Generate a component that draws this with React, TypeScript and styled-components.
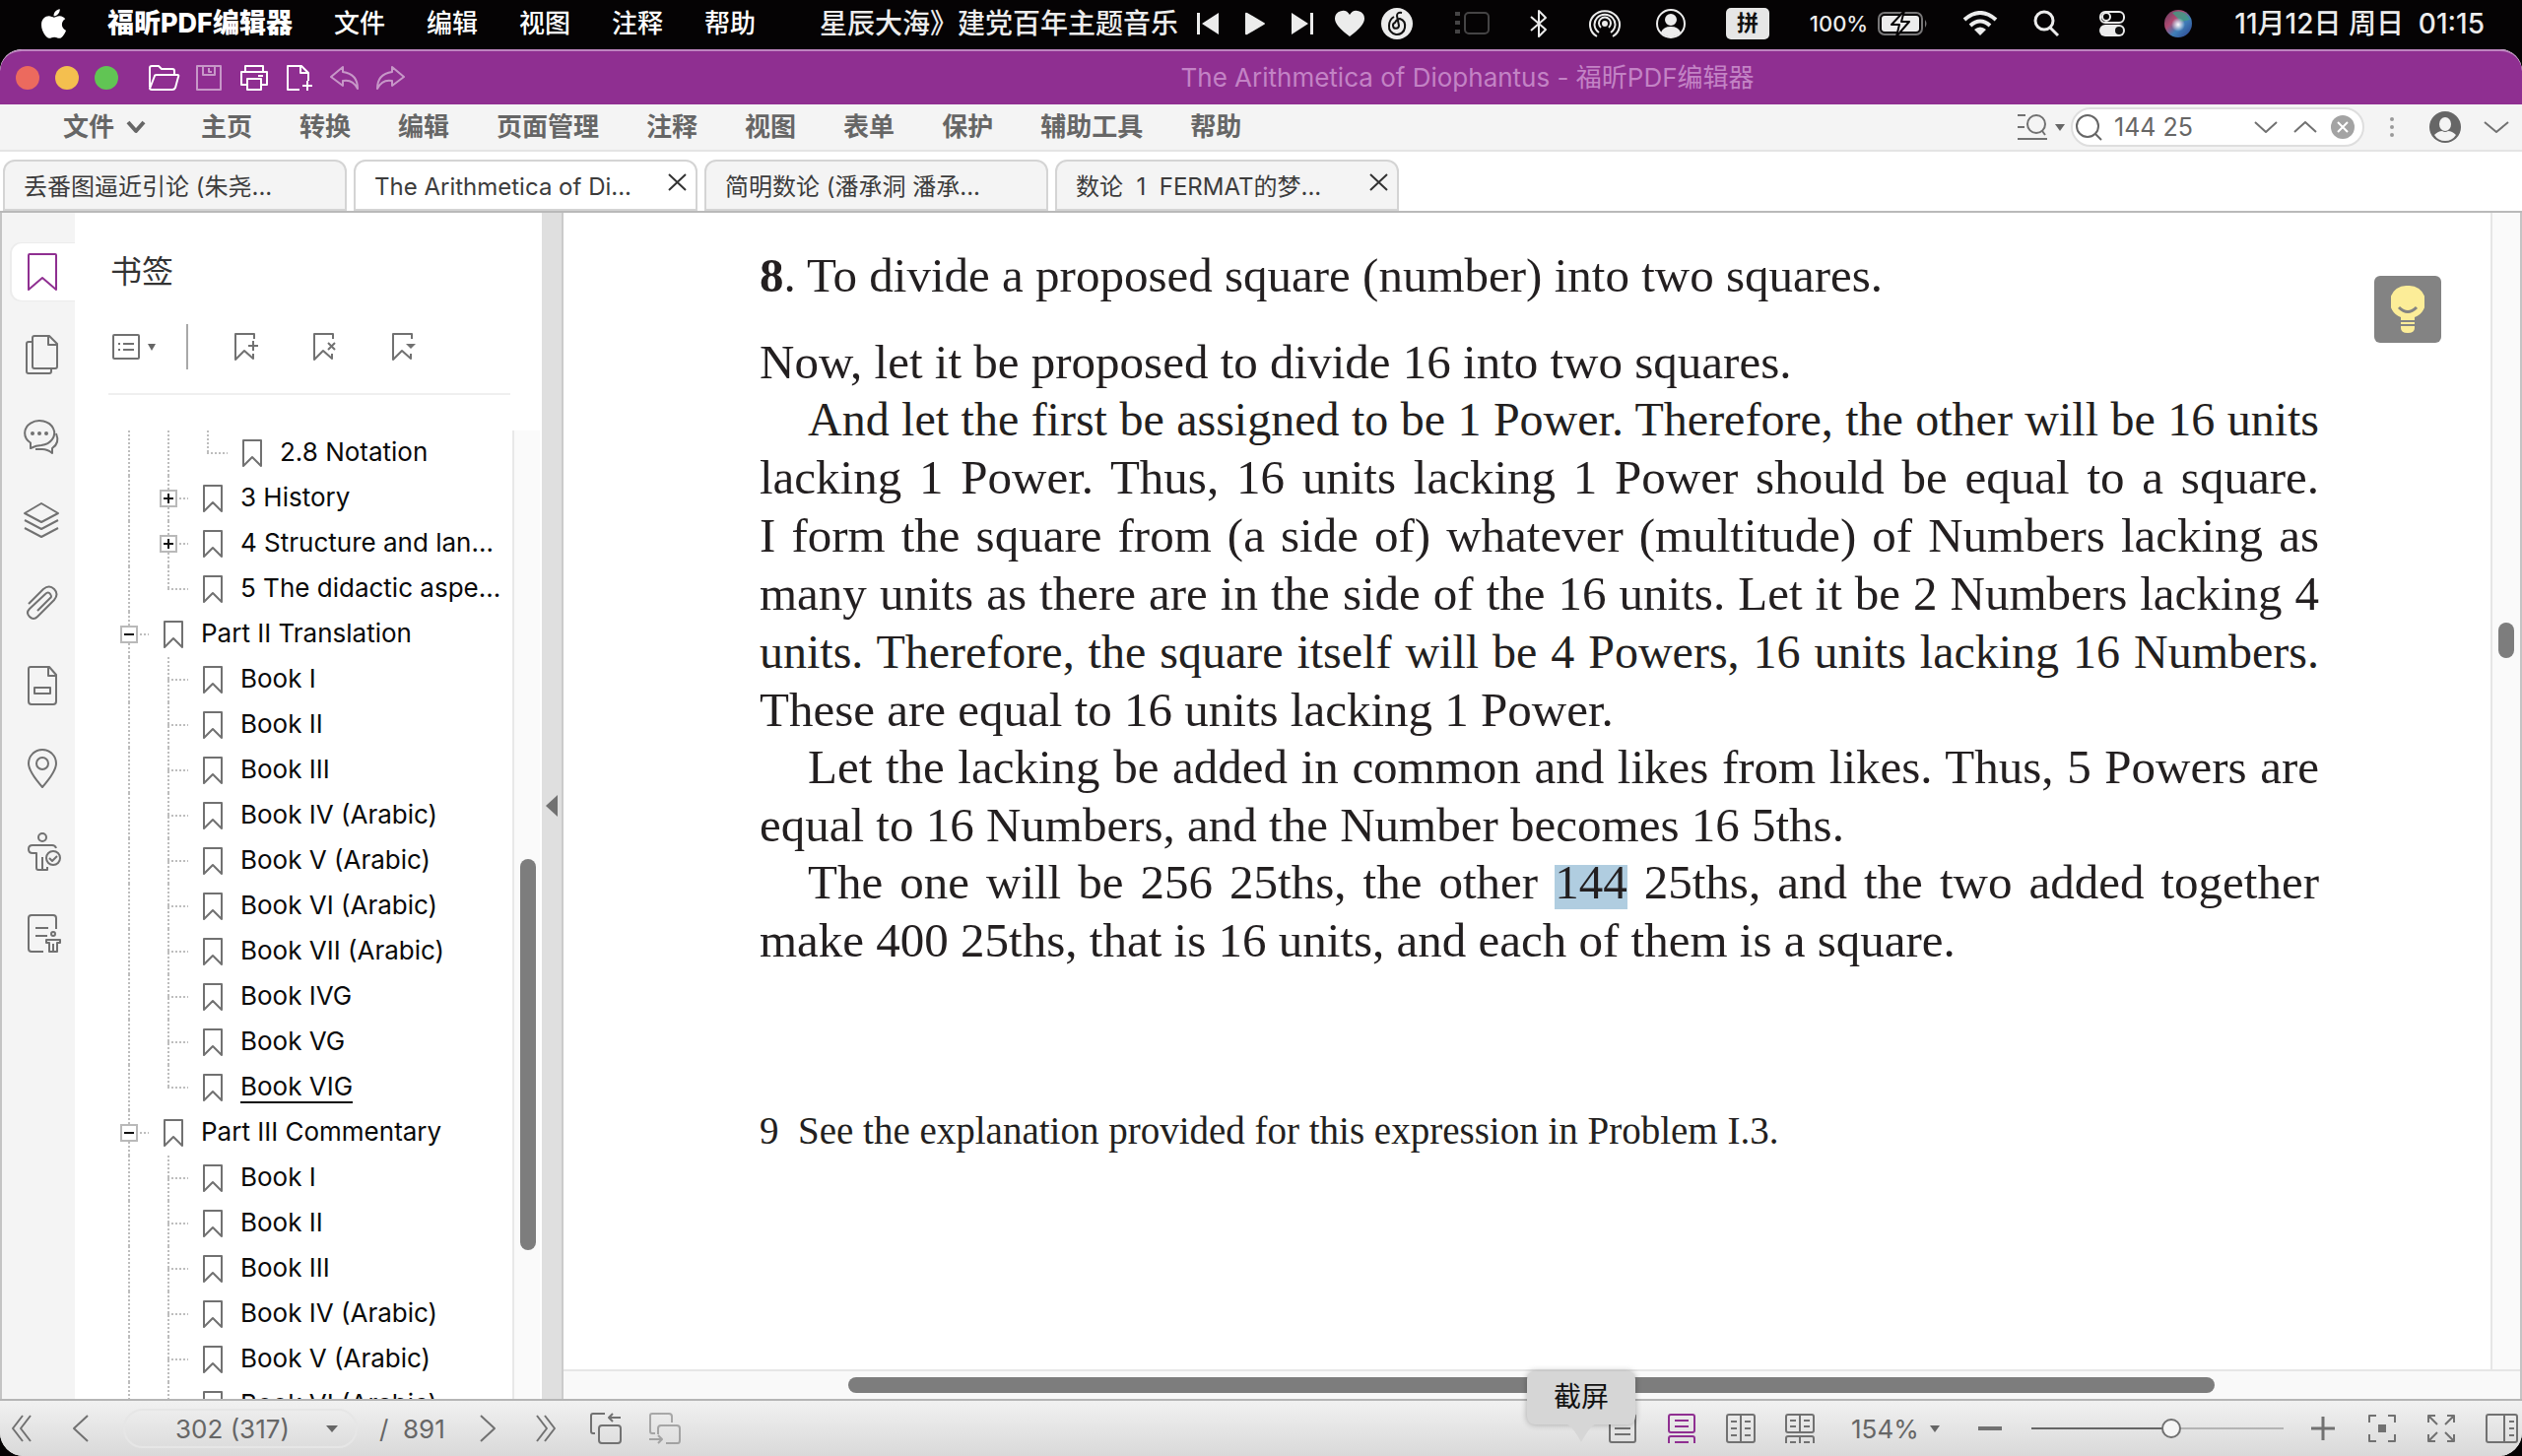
import React from "react";
import styled, { createGlobalStyle, css } from "styled-components";
import { FaApple } from "react-icons/fa";

const ui = `Inter, "Noto Sans CJK SC", sans-serif`;
const serif = `"Liberation Serif", "Noto Sans CJK SC", serif`;
const purple = "#8f2f91";
const grey = "#717171";

const Global = createGlobalStyle`
  * { box-sizing: border-box; }
  body { margin: 0; background: #050304; font-family: ${ui}; }
  button, input, select { font: inherit; color: inherit; border: 0; padding: 0; margin: 0; background: none; outline: 0; }
  svg { display: block; flex: none; }
`;

const Desktop = styled.div`
  display: flex;
  flex-direction: column;
  height: 100vh;
  overflow: hidden;
`;

/* ---------- system menu bar ---------- */
const MenuBar = styled.header`
  display: flex;
  align-items: center;
  flex: none;
  height: 50px;
  padding: 0 38px 2px 40px;
  color: #ececec;
  background: #050304;
  font-size: 26px;
  line-height: 38px;
  white-space: nowrap;
`;
const AppleButton = styled.button`
  width: 29px;
  margin-right: 40px;
  font-size: 32px;
  color: #fff;
  svg { width: 29px; height: 34px; }
`;
const SystemMenus = styled.nav`
  display: flex;
  gap: 42px;
  color: #fff;
  font-weight: 500;
`;
const MenuName = styled.button<{ $app?: boolean }>`
  font-size: ${(p) => (p.$app ? 27 : 26)}px;
  font-weight: ${(p) => (p.$app ? 800 : 500)};
`;
const StatusArea = styled.div`
  display: flex;
  align-items: center;
  margin-left: auto;
`;
const Song = styled.span`
  font-size: 28px;
  font-weight: 500;
  margin-right: 6px;
`;
const MediaButtons = styled.div`
  display: flex;
  margin-right: 19px;
`;
const Slot = styled.button<{ $w?: number }>`
  width: ${(p) => p.$w ?? 67}px;
  height: 44px;
  display: flex;
  align-items: center;
  justify-content: center;
  gap: 10px;
`;
const InputMethod = styled.span`
  width: 44px;
  height: 32px;
  border-radius: 5px;
  background: #e6e6e6;
  color: #111;
  font-size: 22px;
  font-weight: 700;
  line-height: 31px;
  text-align: center;
`;
const BatteryText = styled.span`
  font-size: 22px;
  font-weight: 500;
`;
const Clock = styled.time`
  width: 278px;
  text-align: right;
  font-size: 28px;
  font-weight: 500;
  white-space: pre;
`;

/* ---------- window ---------- */
const Window = styled.main`
  flex: 1;
  min-height: 0;
  display: flex;
  flex-direction: column;
  border-radius: 22px 22px 24px 24px;
  overflow: hidden;
  background: #fff;
`;
const TitleBar = styled.div`
  display: flex;
  align-items: center;
  flex: none;
  height: 56px;
  padding-left: 16px;
  border-top: 2px solid #bd84bf;
  border-radius: 22px 22px 0 0;
  background: ${purple};
`;
const Lights = styled.div`
  display: flex;
  gap: 16px;
  margin-right: 23px;
`;
const Light = styled.button<{ $c: string }>`
  width: 24px;
  height: 24px;
  border-radius: 50%;
  background: ${(p) => p.$c};
`;
const QuickButton = styled.button<{ $dim?: boolean }>`
  width: 46px;
  height: 40px;
  display: flex;
  align-items: center;
  justify-content: center;
  color: #fff;
  opacity: ${(p) => (p.$dim ? 0.5 : 1)};
`;
const WindowTitle = styled.h1`
  flex: 1;
  margin: 0;
  text-align: center;
  font-size: 26px;
  font-weight: 400;
  line-height: 36px;
  color: #c383c5;
`;

const Ribbon = styled.div`
  display: flex;
  align-items: center;
  flex: none;
  height: 48px;
  padding-left: 64px;
  border-bottom: 2px solid #e4e4e4;
  background: #f4f4f4;
  color: #666;
`;
const RibbonTabs = styled.nav`
  display: flex;
  gap: 48px;
`;
const RibbonTab = styled.button`
  display: flex;
  align-items: center;
  gap: 12px;
  font-size: 26px;
  line-height: 38px;
  font-weight: 600;
  white-space: nowrap;
  &:first-child { margin-right: 8px; }
`;
const RibbonTools = styled.div`
  display: flex;
  align-items: center;
  margin-left: auto;
`;
const IconButton = styled.button<{ $w: number; $dim?: boolean }>`
  width: ${(p) => p.$w}px;
  height: 40px;
  display: flex;
  align-items: center;
  justify-content: center;
  gap: 7px;
  color: ${grey};
  opacity: ${(p) => (p.$dim ? 0.55 : 1)};
`;
const SearchBox = styled.label`
  display: flex;
  align-items: center;
  width: 298px;
  height: 40px;
  padding: 0 2px;
  border: 2px solid #dedede;
  border-radius: 20px;
  background: #fff;
  input {
    flex: 1;
    min-width: 0;
    margin-left: 12px;
    font-size: 25px;
    color: #666;
  }
`;

const TabStrip = styled.div`
  display: flex;
  align-items: flex-end;
  flex: none;
  gap: 7px;
  height: 62px;
  padding-left: 3px;
  border-bottom: 2px solid #b9b9b9;
`;
const DocTab = styled.div<{ $active?: boolean }>`
  display: flex;
  width: 349px;
  height: 52px;
  padding: 0 8px 0 19px;
  border: 2px solid #d4d4d4;
  border-radius: 12px 12px 0 0;
  background: ${(p) => (p.$active ? "#fff" : "#f4f4f4")};
  color: #3c3c3c;
`;
const DocTabName = styled.button`
  flex: 1;
  text-align: left;
  font-size: 24px;
  line-height: 36px;
  padding-top: 4px;
  white-space: pre;
`;
const CloseTab = styled.button`
  padding-bottom: 6px;
  color: #333;
`;

const Body = styled.div`
  flex: 1;
  min-height: 0;
  display: flex;
  border-left: 2px solid #c4c4c4;
  border-right: 2px solid #c4c4c4;
`;
const Rail = styled.nav`
  flex: none;
  width: 74px;
  padding: 18px 0 0 10px;
  background: #f4f4f4;
`;
const RailButton = styled.button<{ $active?: boolean }>`
  display: flex;
  align-items: center;
  justify-content: center;
  width: 64px;
  height: 58px;
  margin: 13px 0 26px;
  padding-right: 2px;
  color: ${(p) => (p.$active ? purple : grey)};
  ${(p) =>
    p.$active &&
    css`
      background: #fff;
      border-radius: 10px 0 0 10px;
      box-shadow: -1px 0 0 1px #ececec;
    `}
`;

const SidePanel = styled.aside`
  flex: none;
  width: 474px;
  display: flex;
  flex-direction: column;
  min-height: 0;
`;
const PanelTitle = styled.h2`
  margin: 36px 0 0 36px;
  font-size: 32px;
  font-weight: 400;
  line-height: 48px;
  color: #333;
`;
const PanelTools = styled.div`
  display: flex;
  align-items: center;
  height: 101px;
  margin: 0 32px 36px 34px;
  padding: 4px 0 0 2px;
  border-bottom: 2px solid #efefef;
`;
const ToolDivider = styled.span`
  width: 2px;
  height: 46px;
  margin: 0 19px 0 31px;
  background: #a8a8a8;
`;
const TreeArea = styled.div`
  flex: 1;
  min-height: 0;
  display: flex;
`;
const Tree = styled.ul`
  flex: 1;
  min-width: 0;
  margin: 0;
  padding: 0 0 0 35px;
  overflow: hidden;
  list-style: none;
`;
const dots = (dir: string) =>
  `repeating-linear-gradient(${dir}, #bdbdbd 0 2px, transparent 2px 4px)`;
const TreeRow = styled.li`
  display: flex;
  align-items: center;
  height: 46px;
`;
const Guide = styled.span<{ $line: "full" | "half" | "none"; $branch?: boolean }>`
  flex: none;
  display: flex;
  align-items: center;
  justify-content: center;
  width: 40px;
  height: 46px;
  background:
    ${(p) => dots("180deg")} 19px 0 / ${(p) => (p.$line === "none" ? 0 : 2)}px ${(p) => (p.$line === "half" ? 24 : 46)}px no-repeat,
    ${() => dots("90deg")} 19px 22px / ${(p) => (p.$branch ? 21 : 0)}px 2px no-repeat;
`;
const Toggle = styled.button`
  width: 18px;
  height: 18px;
  border: 2px solid #b9b9b9;
  background: #fff;
  color: #111;
`;
const TreeLink = styled.a<{ $current?: boolean }>`
  display: flex;
  align-items: center;
  gap: 17px;
  min-width: 0;
  margin-left: 14px;
  color: #0a0a0a;
  font-size: 26px;
  line-height: 30px;
  white-space: nowrap;
  text-decoration: none;
  svg { color: ${grey}; }
  span { border-bottom: 2px solid ${(p) => (p.$current ? "#0a0a0a" : "transparent")}; }
`;
const SideTrack = styled.div`
  flex: none;
  width: 30px;
  padding: 435px 0 0 6px;
  border-left: 2px solid #e8e8e8;
  border-right: 2px solid #fff;
  background: #fafafa;
`;
const Thumb = styled.div<{ $h: number }>`
  width: 16px;
  height: ${(p) => p.$h}px;
  border-radius: 8px;
  background: #7d7d7d;
`;
const Splitter = styled.button`
  flex: none;
  width: 22px;
  display: flex;
  align-items: center;
  justify-content: center;
  border-right: 2px solid #cbcbcb;
  background: #dfdfdf;
`;

const Viewer = styled.section`
  flex: 1;
  min-width: 0;
  display: flex;
  flex-direction: column;
`;
const ViewerRow = styled.div`
  flex: 1;
  min-height: 0;
  display: flex;
`;
const Page = styled.article`
  position: relative;
  flex: 1;
  min-width: 0;
  padding: 34px 174px 0 199px;
  overflow: hidden;
  font-family: ${serif};
  color: #231f20;
`;
const Problem = styled.h3`
  margin: 0 0 29px;
  font-size: 49px;
  font-weight: 400;
  line-height: 59px;
`;
const Para = styled.p<{ $indent?: boolean }>`
  margin: ${(p) => (p.$indent ? "-1px 0 0" : "0")};
  font-size: 49px;
  line-height: 59px;
  text-indent: ${(p) => (p.$indent ? 49 : 0)}px;
`;
/* A tight line holds more letters than its neighbours and is set one size down. */
const Line = styled.span<{ $first?: boolean; $end?: boolean; $tight?: boolean }>`
  display: block;
  font-size: ${(p) => (p.$tight ? 48 : 49)}px;
  white-space: nowrap;
  text-indent: ${(p) => (p.$first ? "inherit" : "0")};
  text-align: justify;
  text-align-last: ${(p) => (p.$end ? "left" : "justify")};
`;
const Hit = styled.mark`
  color: inherit;
  background: linear-gradient(#b0cde0, #b0cde0) 0 100% / 100% 45px no-repeat;
`;
const Footnote = styled.p`
  margin: 141px 0 0;
  font-size: 39px;
  line-height: 46px;
  white-space: pre;
`;
const Assistant = styled.button`
  position: absolute;
  top: 64px;
  right: 50px;
  width: 68px;
  height: 68px;
  border-radius: 6px;
  background: #838383;
  display: flex;
  align-items: center;
  justify-content: center;
`;
const VTrack = styled.div`
  flex: none;
  width: 30px;
  padding: 416px 0 0 6px;
  border-left: 2px solid #e6e6e6;
  background: #fafafa;
`;
const HTrack = styled.div`
  flex: none;
  height: 30px;
  padding: 6px 310px 0 289px;
  border-top: 2px solid #e6e6e6;
  background: #f9f9f9;
`;
const HThumb = styled.div`
  height: 16px;
  border-radius: 8px;
  background: #7d7d7d;
`;

/* ---------- status bar ---------- */
const StatusBar = styled.footer`
  display: flex;
  align-items: center;
  flex: none;
  height: 58px;
  border-top: 2px solid #b5b5b5;
  background: linear-gradient(#f1f1f1, #d9d9d9);
  color: #666;
  font-size: 26px;
`;
const PageSelect = styled.label`
  position: relative;
  display: flex;
  align-items: center;
  width: 238px;
  height: 40px;
  margin: 0 22px 0 5px;
  border: 2px solid #e6e6e6;
  border-radius: 20px;
  select { appearance: none; width: 100%; padding-left: 51px; }
  svg { position: absolute; right: 18px; pointer-events: none; }
`;
const Total = styled.span`
  width: 84px;
  white-space: pre;
`;
const ViewTools = styled.div`
  display: flex;
  align-items: center;
  margin-left: auto;
`;
const TipAnchor = styled.div`
  position: relative;
`;
const Tip = styled.div`
  position: absolute;
  left: -67px;
  bottom: 24px;
  width: 110px;
  height: 54px;
  border-radius: 8px;
  background: #d6d6d6;
  box-shadow: 0 0 6px rgba(0, 0, 0, 0.3);
  color: #111;
  font-size: 28px;
  line-height: 52px;
  text-align: center;
  svg { position: absolute; top: 53px; left: 39px; }
`;
const ZoomSelect = styled.label`
  display: flex;
  align-items: center;
  width: 137px;
  padding-left: 22px;
  select { appearance: none; width: 80px; }
`;
const ZoomSlider = styled.input`
  appearance: none;
  width: 256px;
  height: 24px;
  margin: 0 10px 0 16px !important;
  &::-webkit-slider-runnable-track {
    height: 2px;
    background: linear-gradient(90deg, #666 56%, #b4b4b4 56%);
  }
  &::-webkit-slider-thumb {
    appearance: none;
    width: 20px;
    height: 20px;
    margin-top: -9px;
    border: 2px solid #717171;
    border-radius: 50%;
    background: #f6f6f6;
  }
`;
const PanelToggle = styled.div`
  margin-left: 10px;
`;

/* ---------- drawings ---------- */
type IcoProps = { w: number; h: number; s?: number; fill?: string; children: React.ReactNode };
const Ico = ({ w, h, s = 2, fill = "none", children }: IcoProps) => (
  <svg
    width={w}
    height={h}
    viewBox={`0 0 ${w} ${h}`}
    fill={fill}
    stroke={s ? "currentColor" : "none"}
    strokeWidth={s}
    strokeLinejoin="round"
    aria-hidden="true"
  >
    {children}
  </svg>
);
const Caret = ({ w = 10 }: { w?: number }) => (
  <Ico w={w} h={8} s={0} fill="#666">
    <path d={`M0 1H${w}L${w / 2} 8Z`} />
  </Ico>
);
const SmallBookmark = () => (
  <Ico w={22} h={30}>
    <path d="M2 2H20V28L11 19 2 28Z" />
  </Ico>
);
const person = (
  <>
    <circle cx="16" cy="16" r="14" fill="none" />
    <circle cx="16" cy="12" r="5" fill="currentColor" />
    <path d="M7 25Q9 20 16 20T25 25A14 14 0 0 1 7 25Z" fill="currentColor" />
  </>
);

const railIcons: { label: string; art: React.ReactNode }[] = [
  { label: "书签", art: <path d="M6 3Q6 2 7 2H33Q34 2 34 3V38L20 26 6 38Z" /> },
  {
    label: "页面",
    art: <path d="M12 1H27L35 9V32Q35 34 33 34H12Q10 34 10 32V3Q10 1 12 1ZM26 1V10H35M10 7H6Q4 7 4 9V37Q4 39 6 39H27Q29 39 29 37V34" />,
  },
  {
    label: "注释",
    art: (
      <>
        <path d="M8 31V25.500A15 12.500 0 1 1 19 28Q14 28 8 31Z" />
        <path d="M34 16Q38 26 30 31V36Q25 32 20 32H13" />
        <g fill="currentColor" stroke="none">
          <circle cx="10" cy="16" r="2" />
          <circle cx="17" cy="16" r="2" />
          <circle cx="24" cy="16" r="2" />
        </g>
      </>
    ),
  },
  { label: "图层", art: <path d="M19 3 36 13 19 22 2 13ZM2 20 19 29 36 20M2 28 19 37 36 28" /> },
  {
    label: "附件",
    art: <path d="M6 21 21 6Q27 1 32 6T32 17L15 34Q11 38 7 34T7 26L23 11Q26 8 28 11T28 15L15 28" />,
  },
  {
    label: "字段",
    art: <path d="M8 1H27L34 9V36Q34 39 31 39H9Q6 39 6 36V3Q6 1 8 1ZM26 1V10H34M12 22H28V28H12Z" />,
  },
  {
    label: "目标",
    art: (
      <>
        <path d="M20 39Q6 23 6 15A14 14 0 0 1 34 15Q34 23 20 39Z" />
        <circle cx="20" cy="15" r="6" />
      </>
    ),
  },
  {
    label: "辅助功能",
    art: (
      <>
        <circle cx="20" cy="6" r="4" />
        <path d="M34 17Q33 14 30 14H10Q6 14 6 18T10 22H14V37Q14 39 16 39H25V36M20 26V38" />
        <circle cx="31" cy="27" r="7" />
        <path d="M27 27 30 30 35 25" />
      </>
    ),
  },
  {
    label: "标签",
    art: (
      <>
        <path d="M21 38H9Q6 38 6 35V4Q6 1 9 1H31Q34 1 34 4V15M13 14H26M13 22H25" />
        <circle cx="31" cy="20" r="2" />
        <path d="M24 26H38V29H35V38H27V29H24ZM31 30V38" />
      </>
    ),
  },
];

type Guides = ("full" | "half" | "none")[];
type Node = { text: string; lines: Guides; toggle?: "+" | "-"; current?: boolean };
const book = (text: string, end = false, current = false): Node => ({
  text,
  lines: ["full", end ? "half" : "full"],
  current,
});
const nodes: Node[] = [
  { text: "2.8 Notation", lines: ["full", "full", "half"] },
  { text: "3 History", lines: ["full", "full"], toggle: "+" },
  { text: "4 Structure and lan...", lines: ["full", "full"], toggle: "+" },
  { text: "5 The didactic aspe...", lines: ["full", "half"] },
  { text: "Part II Translation", lines: ["full"], toggle: "-" },
  book("Book I"),
  book("Book II"),
  book("Book III"),
  book("Book IV (Arabic)"),
  book("Book V (Arabic)"),
  book("Book VI (Arabic)"),
  book("Book VII (Arabic)"),
  book("Book IVG"),
  book("Book VG"),
  book("Book VIG", true, true),
  { text: "Part III Commentary", lines: ["full"], toggle: "-" },
  book("Book I"),
  book("Book II"),
  book("Book III"),
  book("Book IV (Arabic)"),
  book("Book V (Arabic)"),
  book("Book VI (Arabic)"),
];

const docTabs = [
  { name: "丢番图逼近引论 (朱尧..." },
  { name: "The Arithmetica of Di...", active: true, close: true },
  { name: "简明数论 (潘承洞 潘承..." },
  { name: "数论  1  FERMAT的梦...", close: true },
];

const ribbon = ["主页", "转换", "编辑", "页面管理", "注释", "视图", "表单", "保护", "辅助工具", "帮助"];

export default function App() {
  return (
    <Desktop>
      <Global />
      <MenuBar>
        <AppleButton aria-label="Apple"><FaApple /></AppleButton>
        <SystemMenus>
          <MenuName $app>福昕PDF编辑器</MenuName>
          {["文件", "编辑", "视图", "注释", "帮助"].map((m) => <MenuName key={m}>{m}</MenuName>)}
        </SystemMenus>
        <StatusArea>
          <Song>星辰大海》建党百年主题音乐</Song>
          <MediaButtons>
            <Slot $w={48} aria-label="上一首">
              <Ico w={24} h={24} s={0} fill="currentColor"><path d="M1 1H4V23H1ZM23 1V23L6 12Z" /></Ico>
            </Slot>
            <Slot $w={48} aria-label="播放">
              <Ico w={22} h={24} s={0} fill="currentColor"><path d="M1 2Q1 0 3 1L20 11Q22 12 20 13L3 23Q1 24 1 22Z" /></Ico>
            </Slot>
            <Slot $w={48} aria-label="下一首">
              <Ico w={24} h={24} s={0} fill="currentColor"><path d="M23 1H20V23H23ZM1 1V23L18 12Z" /></Ico>
            </Slot>
            <Slot $w={48} aria-label="喜欢">
              <Ico w={30} h={28} s={0} fill="currentColor"><path d="M15 27Q0 16 0 9A8 8 0 0 1 15 5 8 8 0 0 1 30 9Q30 16 15 27Z" /></Ico>
            </Slot>
            <Slot $w={48} aria-label="网易云音乐">
              <Ico w={32} h={32} s={0} fill="currentColor">
                <circle cx="16" cy="16" r="16" />
                <path d="M21 5Q16 4 16 8L18 18A3 3 0 1 1 14 15Q16 11 19 11 25 13 24 20A8 8 0 0 1 8 18Q8 12 13 9" fill="none" stroke="#111" strokeWidth="2" />
              </Ico>
            </Slot>
          </MediaButtons>
          <Slot aria-label="台前调度">
            <Ico w={36} h={26}>
              <g opacity=".28"><rect x="10" y="2" width="24" height="21" rx="4" /><path d="M0 3H5M0 12H5M0 21H5" strokeWidth="4" /></g>
            </Ico>
          </Slot>
          <Slot aria-label="蓝牙">
            <Ico w={20} h={30}><path d="M2 8 17 21 10 28V2L17 9 2 22" /></Ico>
          </Slot>
          <Slot aria-label="隔空投送">
            <Ico w={32} h={30}>
              <path d="M8 28A15 14 0 1 1 24 28M10 24A10.500 10 0 1 1 22 24M12 19A6 6 0 1 1 20 19" />
              <circle cx="16" cy="15" r="2" fill="currentColor" />
            </Ico>
          </Slot>
          <Slot aria-label="用户"><Ico w={32} h={32} s={2}>{person}</Ico></Slot>
          <Slot $w={90} aria-label="输入法"><InputMethod>拼</InputMethod></Slot>
          <Slot $w={157} aria-label="电池">
            <BatteryText>100%</BatteryText>
            <Ico w={52} h={26}>
              <rect x="1" y="2" width="44" height="22" rx="6" opacity=".5" />
              <path d="M48 9Q51 13 48 17Z" fill="currentColor" opacity=".5" stroke="none" />
              <rect x="4" y="5" width="38" height="16" rx="3" fill="currentColor" stroke="none" />
              <path d="M27 0 14 14H22L19 26 32 11H24Z" fill="currentColor" stroke="#050304" />
            </Ico>
          </Slot>
          <Slot aria-label="无线网络">
            <Ico w={36} h={26} s={4}>
              <path d="M2 9Q18 -5 34 9M8 15Q18 6 28 15" />
              <path d="M12 19Q18 14 24 19L18 25Z" fill="currentColor" stroke="none" />
            </Ico>
          </Slot>
          <Slot aria-label="搜索"><Ico w={28} h={28} s={3}><circle cx="12" cy="11" r="9" /><path d="M18 18 26 26" /></Ico></Slot>
          <Slot aria-label="控制中心">
            <Ico w={28} h={28}>
              <rect x="2" y="2" width="24" height="11" rx="5" />
              <circle cx="8" cy="7" r="4" />
              <rect x="1" y="15" width="26" height="12" rx="6" fill="currentColor" stroke="none" />
              <circle cx="21" cy="21" r="4" fill="#111" stroke="none" />
            </Ico>
          </Slot>
          <Slot aria-label="Siri">
            <Ico w={28} h={28} s={0}>
              <defs>
                <linearGradient id="siri" x1="0" y1="0" x2="1" y2="1">
                  <stop offset="0" stopColor="#5d3a5c" /><stop offset=".35" stopColor="#b04a72" />
                  <stop offset=".6" stopColor="#3f7fb8" /><stop offset="1" stopColor="#2c3e8c" />
                </linearGradient>
                <radialGradient id="glow"><stop offset="0" stopColor="#fff" /><stop offset="1" stopColor="#fff" stopOpacity="0" /></radialGradient>
              </defs>
              <circle cx="14" cy="14" r="14" fill="url(#siri)" />
              <path d="M8 3Q20 -2 26 10L17 12Z" fill="#3f9d84" opacity=".8" />
              <circle cx="14" cy="15" r="7" fill="url(#glow)" />
            </Ico>
          </Slot>
          <Clock>11月12日 周日  01:15</Clock>
        </StatusArea>
      </MenuBar>

      <Window>
        <TitleBar>
          <Lights>
            <Light $c="#ec6a5e" aria-label="关闭" /><Light $c="#f4bf4f" aria-label="最小化" /><Light $c="#61c554" aria-label="缩放" />
          </Lights>
          <QuickButton aria-label="打开"><Ico w={34} h={28}><path d="M3 23V4Q3 2 5 2H12L15 5H26Q28 5 28 7V11M3 25 8 12Q8 11 10 11H31Q33 11 32 13L29 24Q28 26 26 26H5Q3 26 3 24Z" /></Ico></QuickButton>
          <QuickButton $dim aria-label="保存"><Ico w={28} h={28}><path d="M2 2H26V26H2ZM8 2V11H20V2M14 4V8H17" /></Ico></QuickButton>
          <QuickButton aria-label="打印"><Ico w={30} h={28}><path d="M6 8V2H24V8M7 21H2V8H28V21H23M8 15H22V26H8ZM19 12H24" /></Ico></QuickButton>
          <QuickButton aria-label="新建"><Ico w={28} h={28}><path d="M14 26H2V2H16L23 9V17M15 2V9H23M22 17V27M17 22H27" /></Ico></QuickButton>
          <QuickButton $dim aria-label="撤销"><Ico w={32} h={28}><path d="M14 3 2 13 14 22V17Q24 15 29 25 29 10 14 8Z" /></Ico></QuickButton>
          <QuickButton $dim aria-label="重做"><Ico w={32} h={28}><path d="M18 3 30 13 18 22V17Q8 15 3 25 3 10 18 8Z" /></Ico></QuickButton>
          <WindowTitle>The Arithmetica of Diophantus - 福昕PDF编辑器</WindowTitle>
        </TitleBar>

        <Ribbon>
          <RibbonTabs>
            <RibbonTab>文件<Ico w={20} h={14} s={4}><path d="M2 2 10 11 18 2" /></Ico></RibbonTab>
            {ribbon.map((r) => <RibbonTab key={r}>{r}</RibbonTab>)}
          </RibbonTabs>
          <RibbonTools>
            <IconButton $w={62} aria-label="搜索选项">
              <Ico w={32} h={28}><path d="M1 2H9M1 14H8M1 26H31M29 22 26 18" /><ellipse cx="20" cy="11" rx="9" ry="9" /></Ico>
              <Caret />
            </IconButton>
            <SearchBox>
              <Ico w={28} h={28}><circle cx="13" cy="13" r="11" /><path d="M21 21 27 27" /></Ico>
              <input type="text" aria-label="查找" defaultValue="144 25" />
              <IconButton $w={40} aria-label="下一个"><Ico w={24} h={14}><path d="M1 2 12 12 23 2" /></Ico></IconButton>
              <IconButton $w={40} aria-label="上一个"><Ico w={24} h={14}><path d="M1 12 12 2 23 12" /></Ico></IconButton>
              <IconButton $w={36} aria-label="清除">
                <Ico w={24} h={24}><circle cx="12" cy="12" r="12" fill="#a3a3a3" stroke="none" /><path d="M7 7 17 17M17 7 7 17" stroke="#fff" /></Ico>
              </IconButton>
            </SearchBox>
            <IconButton $w={56} aria-label="更多">
              <Ico w={4} h={22} s={0} fill="#999"><circle cx="2" cy="3" r="2" /><circle cx="2" cy="11" r="2" /><circle cx="2" cy="19" r="2" /></Ico>
            </IconButton>
            <IconButton $w={52} aria-label="账户">
              <Ico w={32} h={32}>
                <circle cx="16" cy="16" r="16" fill="#666" stroke="none" />
                <ellipse cx="16" cy="13" rx="6" ry="7" fill="#f4f4f4" stroke="none" />
                <path d="M5 24Q9 20 13 20 16 22 19 20 23 20 27 24 23 30 16 30T5 24Z" fill="#f4f4f4" stroke="none" />
              </Ico>
            </IconButton>
            <IconButton $w={52} aria-label="收起"><Ico w={28} h={14}><path d="M2 2 14 12 26 2" /></Ico></IconButton>
          </RibbonTools>
        </Ribbon>

        <TabStrip>
          {docTabs.map((t) => (
            <DocTab key={t.name} $active={t.active}>
              <DocTabName>{t.name}</DocTabName>
              {t.close && <CloseTab aria-label="关闭标签"><Ico w={20} h={18}><path d="M1 1 18 17M18 1 1 17" /></Ico></CloseTab>}
            </DocTab>
          ))}
        </TabStrip>

        <Body>
          <Rail>
            {railIcons.map((r, i) => (
              <RailButton key={r.label} $active={i === 0} aria-label={r.label}>
                <Ico w={40} h={40}>{r.art}</Ico>
              </RailButton>
            ))}
          </Rail>
          <SidePanel>
            <PanelTitle>书签</PanelTitle>
            <PanelTools>
              <IconButton $w={46} aria-label="选项">
                <Ico w={30} h={26}><rect x="2" y="1" width="26" height="24" rx="1" /><path d="M7 10H9M12 10H23M7 16H9M12 16H23" /></Ico>
                <Caret w={8} />
              </IconButton>
              <ToolDivider />
              <IconButton $w={80} aria-label="添加书签">
                <Ico w={26} h={30}><path d="M21 7V2H2V28L11 19 20 27V22M20 9V19M15 14H25" /></Ico>
              </IconButton>
              <IconButton $w={80} aria-label="删除书签">
                <Ico w={26} h={30}><path d="M21 7V2H2V28L11 19 20 27V22M16 11 23 18M23 11 16 18" /></Ico>
              </IconButton>
              <IconButton $w={80} aria-label="展开书签">
                <Ico w={26} h={30}><path d="M21 7V2H2V28L11 19 20 27V22" /><path d="M15 12H25L20 17Z" fill="currentColor" stroke="none" /></Ico>
              </IconButton>
            </PanelTools>
            <TreeArea>
              <Tree>
                {nodes.map((n, i) => (
                  <TreeRow key={i}>
                    {n.lines.map((l, k) => (
                      <Guide key={k} $line={l} $branch={k === n.lines.length - 1}>
                        {n.toggle && k === n.lines.length - 1 && (
                          <Toggle aria-label={n.toggle === "+" ? "展开" : "折叠"}>
                            <Ico w={14} h={14}><path d={n.toggle === "+" ? "M2 7H12M7 2V12" : "M2 7H12"} /></Ico>
                          </Toggle>
                        )}
                      </Guide>
                    ))}
                    <TreeLink href="#" $current={n.current}>
                      <SmallBookmark />
                      <span>{n.text}</span>
                    </TreeLink>
                  </TreeRow>
                ))}
              </Tree>
              <SideTrack><Thumb $h={397} /></SideTrack>
            </TreeArea>
          </SidePanel>
          <Splitter aria-label="收起面板"><Ico w={12} h={22} s={0} fill={grey}><path d="M12 0V22L0 11Z" /></Ico></Splitter>

          <Viewer>
            <ViewerRow>
              <Page>
                <Problem><b>8</b>. To divide a proposed square (number) into two squares.</Problem>
                <Para><Line $end>Now, let it be proposed to divide 16 into two squares.</Line></Para>
                <Para $indent>
                  <Line $first $tight>And let the first be assigned to be 1 Power. Therefore, the other will be 16 units</Line>
                  <Line>lacking 1 Power. Thus, 16 units lacking 1 Power should be equal to a square.</Line>
                  <Line>I form the square from (a side of) whatever (multitude) of Numbers lacking as</Line>
                  <Line>many units as there are in the side of the 16 units. Let it be 2 Numbers lacking 4</Line>
                  <Line $tight>units. Therefore, the square itself will be 4 Powers, 16 units lacking 16 Numbers.</Line>
                  <Line $end>These are equal to 16 units lacking 1 Power.</Line>
                </Para>
                <Para $indent>
                  <Line $first>Let the lacking be added in common and likes from likes. Thus, 5 Powers are</Line>
                  <Line $end>equal to 16 Numbers, and the Number becomes 16 5ths.</Line>
                </Para>
                <Para $indent>
                  <Line $first>The one will be 256 25ths, the other <Hit>144</Hit> 25ths, and the two added together</Line>
                  <Line $end>make 400 25ths, that is 16 units, and each of them is a square.</Line>
                </Para>
                <Footnote>9  See the explanation provided for this expression in Problem I.3.</Footnote>
                <Assistant aria-label="智能助手">
                  <Ico w={34} h={50} s={0}>
                    <path d="M17 1A16.500 16.500 0 0 1 24 33V36H10V33A16.500 16.500 0 0 1 17 1ZM10 38H24V40H10ZM10 42H24V44Q24 49 17 49T10 44Z" fill="#fced98" />
                    <path d="M8 23Q17 32 26 23" stroke="#838383" strokeWidth="3" />
                  </Ico>
                </Assistant>
              </Page>
              <VTrack><Thumb $h={36} /></VTrack>
            </ViewerRow>
            <HTrack><HThumb /></HTrack>
          </Viewer>
        </Body>

        <StatusBar>
          <IconButton $w={44} aria-label="第一页"><Ico w={22} h={28}><path d="M12 1 2 14 12 27M20 1 10 14 20 27" /></Ico></IconButton>
          <IconButton $w={76} aria-label="上一页"><Ico w={18} h={28}><path d="M16 1 2 14 16 27" /></Ico></IconButton>
          <PageSelect>
            <select aria-label="页码" defaultValue="p"><option value="p">302 (317)</option></select>
            <Caret w={12} />
          </PageSelect>
          <Total>/  891</Total>
          <IconButton $w={52} aria-label="下一页"><Ico w={18} h={28}><path d="M2 1 16 14 2 27" /></Ico></IconButton>
          <IconButton $w={66} aria-label="最后一页"><Ico w={22} h={28}><path d="M2 1 12 14 2 27M10 1 20 14 10 27" /></Ico></IconButton>
          <IconButton $w={56} aria-label="后退视图">
            <Ico w={34} h={34}><path d="M6 22H4Q2 22 2 20V4Q2 2 4 2H16M32 6H20M24 2 20 6 24 10" /><rect x="10" y="14" width="22" height="18" rx="3" /></Ico>
          </IconButton>
          <IconButton $w={64} $dim aria-label="前进视图">
            <Ico w={34} h={34}><path d="M7 22H4Q2 22 2 20V4Q2 2 4 2H21Q24 2 24 5V11M1 28H14M10 24 14 28 10 32M18 32H30Q32 32 32 29V17Q32 14 29 14H13Q10 14 10 17V23" /></Ico>
          </IconButton>

          <ViewTools>
            <TipAnchor>
              <IconButton $w={60} aria-label="单页"><Ico w={30} h={32}><rect x="2" y="2" width="26" height="28" rx="2" /><path d="M7 10H23M7 16H23M7 22H23" /></Ico></IconButton>
              <Tip role="tooltip">截屏<Ico w={32} h={20} s={0} fill="#d6d6d6"><path d="M0 0H32Q25 2 16 19 7 2 0 0Z" /></Ico></Tip>
            </TipAnchor>
            <IconButton $w={60} aria-label="连续">
              <Ico w={30} h={32}><g stroke={purple}><rect x="2" y="2" width="26" height="18" rx="2" /><path d="M8 8H22M8 14H22M2 31V26Q2 24 4 24H26Q28 24 28 26V31M8 30H22" /></g></Ico>
            </IconButton>
            <IconButton $w={60} aria-label="双页">
              <Ico w={32} h={32}><rect x="2" y="2" width="28" height="28" rx="2" /><path d="M16 2V30M6 9H12M6 16H12M6 23H12M20 9H26M20 16H26M20 23H26" /></Ico>
            </IconButton>
            <IconButton $w={60} aria-label="双页连续">
              <Ico w={32} h={32}><rect x="2" y="2" width="28" height="18" rx="2" /><path d="M16 2V20M6 8H12M6 14H12M20 8H26M20 14H26M2 31V26Q2 24 4 24H28Q30 24 30 26V31M16 24V31M6 30H12M20 30H26" /></Ico>
            </IconButton>
            <ZoomSelect>
              <select aria-label="缩放比例" defaultValue="z"><option value="z">154%</option></select>
              <Caret />
            </ZoomSelect>
            <IconButton $w={52} aria-label="缩小"><Ico w={24} h={24} s={4}><path d="M0 12H24" /></Ico></IconButton>
            <ZoomSlider type="range" aria-label="缩放" min={0} max={100} defaultValue={56} />
            <IconButton $w={60} aria-label="放大"><Ico w={24} h={24} s={3}><path d="M0 12H24M12 0V24" /></Ico></IconButton>
            <IconButton $w={60} aria-label="适合页面">
              <Ico w={30} h={30}><path d="M2 9V2H9M21 2H28V9M28 21V28H21M9 28H2V21" /><rect x="11" y="11" width="8" height="8" fill="currentColor" stroke="none" /></Ico>
            </IconButton>
            <IconButton $w={60} aria-label="全屏">
              <Ico w={30} h={30}><path d="M2 9V2H9M2 2 11 11M21 2H28V9M28 2 19 11M28 21V28H21M28 28 19 19M9 28H2V21M2 28 11 19" /></Ico>
            </IconButton>
            <PanelToggle>
              <IconButton $w={42} aria-label="侧边栏">
                <Ico w={34} h={32}><rect x="2" y="2" width="31" height="28" rx="2" /><path d="M20 2V30M25 9H30M25 16H30M25 23H30" /></Ico>
              </IconButton>
            </PanelToggle>
          </ViewTools>
        </StatusBar>
      </Window>
    </Desktop>
  );
}
